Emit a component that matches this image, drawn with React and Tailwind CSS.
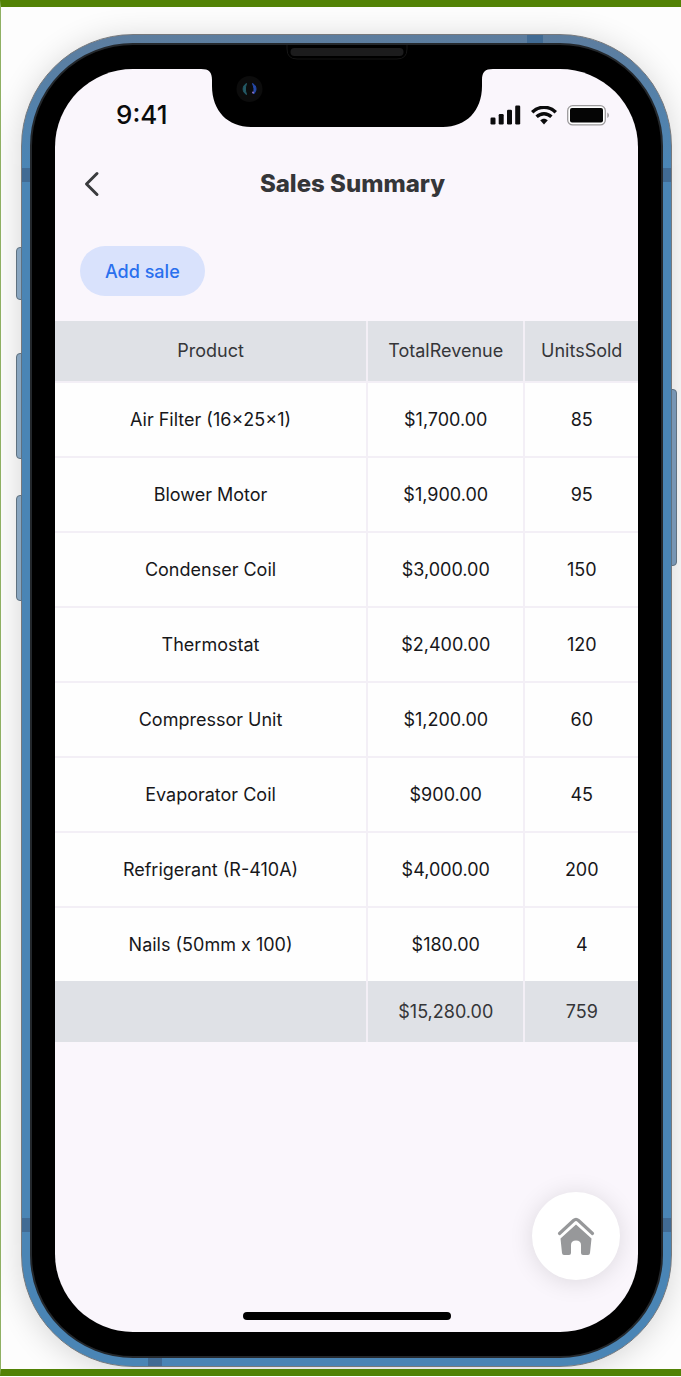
const sales = [
  ["Air Filter (16×25×1)", "$1,700.00", 85],
  ["Blower Motor", "$1,900.00", 95],
  ["Condenser Coil", "$3,000.00", 150],
  ["Thermostat", "$2,400.00", 120],
  ["Compressor Unit", "$1,200.00", 60],
  ["Evaporator Coil", "$900.00", 45],
  ["Refrigerant (R-410A)", "$4,000.00", 200],
  ["Nails (50mm x 100)", "$180.00", 4],
];

function Notch() {
  return (
    <svg
      className="absolute left-1/2 -top-[10px] -translate-x-1/2"
      width="292"
      height="93"
      viewBox="0 0 292 93"
      aria-hidden="true"
    >
      <path
        d="M0 32V34C8 34 11 37 11 45V51C11 76 27 92 50 92H242C265 92 281 76 281 51V45C281 37 284 34 292 34V32Z"
        fill="#000"
      />
      <path d="M86 10V14Q86 24 96 24H196Q206 24 206 14V10" fill="#000" stroke="#151515" />
      <rect x="89.500" y="13" width="113" height="8" rx="4" fill="#1c1c1d" />
      <circle cx="48.500" cy="54" r="13" fill="#0c0c0c" />
      <path d="M45.500 48.500C41 51 41 57 45.500 59.500C44 55 44 53 45.500 48.500Z" fill="#245a66" stroke="#245a66" />
      <path d="M51.500 48.500C56 51 56 56 52.500 59C53.500 55 53 52 51.500 48.500Z" fill="#2549a8" stroke="#2549a8" />
      <circle cx="52" cy="57.500" r="1" fill="#8d6fc4" />
    </svg>
  );
}

function StatusBar() {
  return (
    <div className="flex h-[92px] items-center justify-between pl-[61px] pr-7">
      <span className="text-[26px] font-medium leading-8 text-[#0b0b0c]">9:41</span>
      <div className="flex items-center gap-[10px]">
        <svg width="31" height="20" viewBox="0 0 31 20" fill="#0b0b0c" aria-hidden="true">
          <rect x="0.500" y="12.500" width="5" height="7" rx="1.200" />
          <rect x="8.700" y="9" width="5" height="10.500" rx="1.200" />
          <rect x="17" y="4.700" width="5" height="14.800" rx="1.200" />
          <rect x="25.200" y="0.500" width="5" height="19" rx="1.200" />
        </svg>
        <svg width="26" height="19" viewBox="0 0 26 19" fill="none" stroke="#0b0b0c" aria-hidden="true">
          <path d="M1.200 6.200C8 -0.300 18 -0.300 24.800 6.200" strokeWidth="3.500" />
          <path d="M5.600 10.800C10 6.700 16 6.700 20.400 10.800" strokeWidth="3.400" />
          <path d="M9.200 14.300C11.400 12.200 14.600 12.200 16.800 14.300L13 18.400Z" fill="#0b0b0c" stroke="none" />
        </svg>
        <svg width="43" height="21" viewBox="0 0 43 21" aria-hidden="true">
          <rect x="0.700" y="0.700" width="37.600" height="19.200" rx="5" fill="#fff" stroke="#9c9a9c" strokeWidth="1.300" />
          <rect x="3" y="3" width="33" height="14.600" rx="2" fill="#050505" />
          <path d="M40.300 7.500C42.500 8.500 42.500 12 40.300 13Z" fill="#9c9a9c" />
        </svg>
      </div>
    </div>
  );
}

function SalesTable() {
  const line = "border-r-2 border-r-[#f3eff6] last:border-r-0";
  return (
    <table className="mt-[25px] w-full table-fixed border-separate border-spacing-0 text-center text-[18px] leading-6 text-[#17171a]">
      <colgroup>
        <col className="w-[53.7%]" />
        <col className="w-[27%]" />
        <col className="w-[19.3%]" />
      </colgroup>
      <thead className="bg-[#dfe1e6] text-[#353639]">
        <tr className="h-[60px]">
          {["Product", "TotalRevenue", "UnitsSold"].map((name) => (
            <th key={name} scope="col" className={`font-normal ${line}`}>
              {name}
            </th>
          ))}
        </tr>
      </thead>
      <tbody className="bg-[#fefefe]">
        {sales.map(([product, revenue, units]) => (
          <tr key={product} className="h-[75px] *:border-t-2 *:border-t-[#f3eff6]">
            <td className={line}>{product}</td>
            <td className={line}>{revenue}</td>
            <td className={line}>{units}</td>
          </tr>
        ))}
      </tbody>
      <tfoot className="bg-[#dfe1e6] text-[#353639]">
        <tr className="h-[61px]">
          <td className={line}></td>
          <td className={line}>$15,280.00</td>
          <td className={line}>759</td>
        </tr>
      </tfoot>
    </table>
  );
}

function FrameDetails() {
  const left = "absolute -left-[6px] w-[6px] rounded-l-[4px] border border-[#5f7180] bg-[#89a6c0]";
  const band = "absolute bg-[#416b94]";
  return (
    <>
      <span className={`${left} top-[212px] h-[53px]`} />
      <span className={`${left} top-[318px] h-[106px]`} />
      <span className={`${left} top-[460px] h-[106px]`} />
      <span className="absolute -right-[6px] top-[354px] h-[177px] w-[6px] rounded-r-[4px] border border-[#5f7180] bg-[#7896b4]" />
      <span className={`${band} right-[128px] top-0 h-2 w-4`} />
      <span className={`${band} left-0 top-[133px] h-[14px] w-2`} />
      <span className={`${band} right-0 top-[133px] h-[14px] w-2`} />
      <span className={`${band} bottom-[134px] left-0 h-[14px] w-2`} />
      <span className={`${band} bottom-[134px] right-0 h-[14px] w-2`} />
      <span className={`${band} bottom-0 left-[126px] h-2 w-[14px]`} />
    </>
  );
}

export default function App() {
  return (
    <div className="flex min-h-screen flex-col bg-white pb-px font-[Inter,sans-serif]">
      <main className="flex flex-1 flex-col overflow-hidden border-y-[7px] border-l border-y-[#528205] border-l-[#8fb063] bg-[#fdfdfd] pb-[2px] pl-5 pr-[9px] pt-[27px]">
        <div className="relative flex flex-1 flex-col rounded-[112px] border border-[#77797c] bg-linear-to-b from-[#5d7d9e] via-[#4a85b5] via-10% to-[#4a85b5] p-2 shadow-[0_4px_32px_rgba(0,0,0,0.16)]">
          <FrameDetails />
          <div className="relative flex flex-1 flex-col rounded-[103px] border-2 border-[#24282c] bg-black px-[23px] py-6">
            <div className="relative flex flex-1 flex-col overflow-hidden rounded-[78px] bg-[#faf6fc]">
              <StatusBar />
              <header className="flex h-[46px] items-center pl-6 pr-10">
                <button type="button" aria-label="Back" className="flex h-10 w-7 items-center text-[#3a3b3e]">
                  <svg width="24" height="28" viewBox="0 0 24 28" fill="none" stroke="currentColor" strokeWidth="3" strokeLinecap="round" strokeLinejoin="round">
                    <path d="M18 3.500L7.500 14L18 24.500" />
                  </svg>
                </button>
                <h1 className="flex-1 text-center text-[24px] font-extrabold leading-8 text-[#353639]">Sales Summary</h1>
              </header>
              <div className="px-[25px] pt-[39px]">
                <button type="button" className="h-[50px] rounded-full bg-[#d9e2fc] px-[25px] text-[18px] font-medium text-[#2a70ee]">
                  Add sale
                </button>
              </div>
              <SalesTable />
              <div className="mx-auto mb-3 mt-auto h-2 w-[208px] rounded-full bg-black" />
              <button
                type="button"
                aria-label="Home"
                className="absolute bottom-[52px] right-[18px] flex size-[88px] items-center justify-center rounded-full bg-white text-[#97989a] shadow-[0_2px_24px_rgba(0,0,0,0.12)]"
              >
                <svg width="38" height="40" viewBox="0 0 38 40" fill="currentColor">
                  <path d="M2.500 17.500L16.500 4.500Q19 2.300 21.500 4.500L35.500 17.500" fill="none" stroke="currentColor" strokeWidth="3.200" strokeLinecap="round" strokeLinejoin="round" />
                  <path d="M19 8.500L34.500 22.500L33 37Q32.800 39 31 39H26Q24 39 24 37V29Q24 24.500 19 24.500Q14 24.500 14 29V37Q14 39 12 39H7Q5.200 39 5 37L3.500 22.500Z" />
                </svg>
              </button>
            </div>
            <Notch />
          </div>
        </div>
      </main>
    </div>
  );
}
